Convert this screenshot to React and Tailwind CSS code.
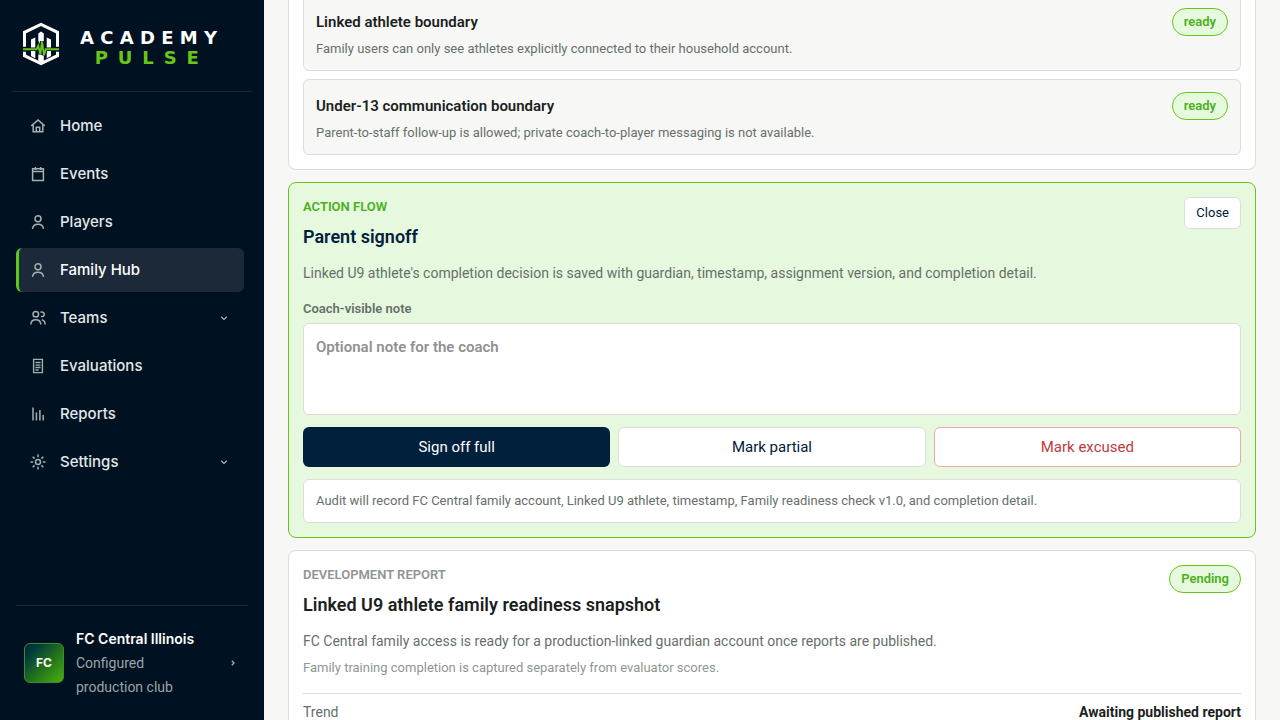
import React from "react";

const iconProps = {
  viewBox: "0 0 16 16",
  fill: "none",
  stroke: "currentColor",
  strokeWidth: 1.5,
  className: "size-4 shrink-0 text-[#a3b0b0]",
  "aria-hidden": true,
};

function HomeIcon() {
  return (
    <svg {...iconProps}>
      <path d="M1.3 7.9 8 2l6.700 5.900M3.200 6.600v7.100h9.600V6.600M6.300 13.500V9.300h3.400v4.200" />
    </svg>
  );
}

function CalendarIcon() {
  return (
    <svg {...iconProps}>
      <path d="M2.600 2.800h10.800v11.700H2.600zM2.600 5.600h10.800M5.400 1v3M10.600 1v3" />
    </svg>
  );
}

function PersonIcon() {
  return (
    <svg {...iconProps}>
      <circle cx="8" cy="4.700" r="3" />
      <path d="M2.500 14.800c.3-2.900 2.700-4.600 5.500-4.600s5.200 1.700 5.500 4.600" />
    </svg>
  );
}

function PeopleIcon() {
  return (
    <svg {...iconProps}>
      <circle cx="5.800" cy="4.200" r="2.800" />
      <path d="M.8 14.500c.2-2.900 2.200-4.700 5-4.700s4.800 1.800 5 4.700M10.500 2.300c2-.9 3.800.2 3.800 2s-1.700 2.700-3.300 2.100M11.800 9.800c2 .5 3.200 2.200 3.400 4.700" />
    </svg>
  );
}

function DocumentIcon() {
  return (
    <svg {...iconProps}>
      <path d="M3.600 1.400h8.800v13.200H3.600zM5.500 4.500h5M5.500 7.100h5M5.500 9.500h5M5.500 12h3" strokeWidth="1.400" />
    </svg>
  );
}

function ChartIcon() {
  return (
    <svg {...iconProps}>
      <path d="M3 1.500v13M6.400 6.500v8M9.900 4v10.500M13.200 9v5.500" />
    </svg>
  );
}

function GearIcon() {
  return (
    <svg {...iconProps}>
      <circle cx="8" cy="8" r="2.500" />
      <path d="M8 .5v2.700M8 12.800v2.700M.5 8h2.700M12.800 8h2.700M2.700 2.700l1.900 1.900M11.400 11.400l1.900 1.900M13.300 2.700l-1.900 1.900M2.700 13.300l1.900-1.900" />
    </svg>
  );
}

function Chevron({ right }) {
  return (
    <svg
      viewBox="0 0 8 8"
      fill="none"
      stroke="currentColor"
      strokeWidth="1.300"
      className="size-2 shrink-0 text-[#a3b0b0]"
      aria-hidden="true"
    >
      <path d={right ? "M2.800 1.800 5 4 2.800 6.200" : "M1.200 2.700 4 5.400l2.800-2.700"} />
    </svg>
  );
}

function LogoMark() {
  return (
    <svg viewBox="0 0 38 44" className="h-11 w-[38px] shrink-0" fill="none" aria-hidden="true">
      <path d="M2.500 24.800V10.300L19 2.400l16.500 7.900v14.500" stroke="#fff" strokeWidth="3" />
      <path d="M2.500 29.800v3.900L19 41.600l16.500-7.900v-3.900" stroke="#fff" strokeWidth="3" />
      <path
        d="M9 17.500l4.300-2v20.800L9 34zM16.300 11.500L19 9.600l2.800 1.900v28L19 41l-2.700-1.500zM24.700 15.500l4.300 2V34l-4.300 2.300z"
        fill="#fff"
      />
      <path d="M1 27.300h13.500l1.800-3.500 2 8.500 1.700-13 2 14 1.800-6h13.200" stroke="#001122" strokeWidth="3.600" />
      <path d="M1 27.300h13.500l1.800-3.500 2 8.500 1.700-13 2 14 1.800-6h13.200" stroke="#66c61c" strokeWidth="1.900" />
    </svg>
  );
}

const navItems = [
  { label: "Home", Icon: HomeIcon },
  { label: "Events", Icon: CalendarIcon },
  { label: "Players", Icon: PersonIcon },
  { label: "Family Hub", Icon: PersonIcon, active: true },
  { label: "Teams", Icon: PeopleIcon, expandable: true },
  { label: "Evaluations", Icon: DocumentIcon },
  { label: "Reports", Icon: ChartIcon },
  { label: "Settings", Icon: GearIcon, expandable: true },
];

function Sidebar() {
  return (
    <aside className="flex w-[264px] shrink-0 flex-col bg-[#001122]">
      <div className="mx-3 flex h-[92px] items-center gap-5 border-b border-[#1b2836] pb-1 pl-[10px]">
        <LogoMark />
        <div className="flex flex-col items-center pt-2 font-['DejaVu_Sans'] text-lg leading-5 font-bold">
          <span className="tracking-[0.35em] text-white">ACADEMY</span>
          <span className="tracking-[0.55em] text-[#66c61c]">PULSE</span>
        </div>
      </div>
      <nav className="flex flex-col gap-1 pt-3 pr-5 pl-4">
        {navItems.map(({ label, Icon, active, expandable }) => (
          <a
            key={label}
            href="#"
            aria-current={active ? "page" : undefined}
            className={
              "flex h-11 items-center gap-[14px] rounded-md border-l-3 pr-4 pl-[11px] font-['Inter',sans-serif] text-[15px] font-medium " +
              (active ? "border-[#5cc81e] bg-[#1c2938] text-white" : "border-transparent text-[#e1e8e8]")
            }
          >
            <Icon />
            <span className="flex-1">{label}</span>
            {expandable && <Chevron />}
          </a>
        ))}
      </nav>
      <div className="mx-4 mt-auto border-t border-[#1b2836] px-2 py-[21px]">
        <button type="button" className="flex w-full items-center gap-3 pr-[3px] text-left">
          <span className="flex size-10 shrink-0 items-center justify-center rounded-md border border-[#3f8a3a] bg-linear-135 from-[#00203c] via-[#1f6a1c] to-[#46b400] font-['Inter',sans-serif] text-xs font-bold text-white">
            FC
          </span>
          <span className="flex-1 text-sm leading-6">
            <span className="block font-['Inter',sans-serif] font-semibold whitespace-nowrap text-white">FC Central Illinois</span>
            <span className="block w-28 text-[#99a5a8]">Configured production club</span>
          </span>
          <Chevron right />
        </button>
      </div>
    </aside>
  );
}

function Pill({ children }) {
  return (
    <span className="flex h-7 shrink-0 items-center rounded-full border border-[#66c61c] bg-[#e6f8de] px-[11px] text-[13px] font-semibold text-[#4bb01a]">
      {children}
    </span>
  );
}

function Boundary({ title, text, className }) {
  return (
    <div className={"border border-[#dcdedc] bg-[#f7f8f6] px-3 pb-3 " + className}>
      <div className="flex h-7 items-center justify-between">
        <h3 className="text-[15px] font-semibold text-[#1b1f1d]">{title}</h3>
        <Pill>ready</Pill>
      </div>
      <p className="mt-1 text-[13px] leading-[18px] text-[#66706a]">{text}</p>
    </div>
  );
}

export default function App() {
  return (
    <div className="flex h-screen overflow-hidden bg-[#f7f8f6] font-['Roboto',sans-serif]">
      <Sidebar />
      <main className="flex min-w-0 flex-1 flex-col gap-3 overflow-y-auto px-6 [scrollbar-width:none]">
        <section className="flex shrink-0 flex-col gap-2 rounded-b-lg border border-t-0 border-[#dcdedc] bg-white px-[14px] pb-[14px]">
          <Boundary
            title="Linked athlete boundary"
            text="Family users can only see athletes explicitly connected to their household account."
            className="rounded-b-md border-t-0 pt-2"
          />
          <Boundary
            title="Under-13 communication boundary"
            text="Parent-to-staff follow-up is allowed; private coach-to-player messaging is not available."
            className="rounded-md pt-3"
          />
        </section>

        <section className="shrink-0 rounded-lg border border-[#66c61c] bg-[#e6f8de] p-[14px]">
          <div className="flex items-start justify-between">
            <div>
              <p className="text-[13px] leading-5 font-semibold text-[#4bb01a]">ACTION FLOW</p>
              <h2 className="mt-1.5 text-lg leading-7 font-semibold text-[#00203c]">Parent signoff</h2>
            </div>
            <button
              type="button"
              className="h-8 rounded-md border border-[#dcdedc] bg-white px-[11px] text-[13px] text-[#00203c]"
            >
              Close
            </button>
          </div>
          <p className="mt-3 text-sm leading-5 text-[#66706a]">
            Linked U9 athlete's completion decision is saved with guardian, timestamp, assignment version, and completion detail.
          </p>
          <label htmlFor="note" className="mt-4 block text-[13px] leading-5 font-semibold text-[#66706a]">
            Coach-visible note
          </label>
          <textarea
            id="note"
            placeholder="Optional note for the coach"
            className="mt-1 block h-[92px] w-full resize-none rounded-md border border-[#dcdedc] bg-white px-3 py-3 text-[15px] leading-[22px] font-semibold text-[#1b1f1d] placeholder:text-[#8f9290]"
          />
          <div className="mt-3 grid grid-cols-3 gap-2 text-[15px]">
            <button type="button" className="h-10 rounded-md bg-[#00203c] text-white">Sign off full</button>
            <button type="button" className="h-10 rounded-md border border-[#dcdedc] bg-white text-[#00203c]">Mark partial</button>
            <button type="button" className="h-10 rounded-md border border-[#eda9a6] bg-white text-[#bd3b3b]">Mark excused</button>
          </div>
          <p className="mt-3 rounded-md border border-[#dcdedc] bg-white px-3 py-[11px] text-[13px] leading-5 text-[#66706a]">
            Audit will record FC Central family account, Linked U9 athlete, timestamp, Family readiness check v1.0, and completion detail.
          </p>
        </section>

        <section className="shrink-0 rounded-lg border border-[#dcdedc] bg-white p-[14px]">
          <div className="flex items-start justify-between">
            <div>
              <p className="text-[13px] leading-5 font-semibold text-[#8f9692]">DEVELOPMENT REPORT</p>
              <h2 className="mt-1.5 text-lg leading-7 font-semibold text-[#1b1f1d]">Linked U9 athlete family readiness snapshot</h2>
            </div>
            <Pill>Pending</Pill>
          </div>
          <p className="mt-3 text-sm leading-5 text-[#66706a]">
            FC Central family access is ready for a production-linked guardian account once reports are published.
          </p>
          <p className="mt-2 text-[13px] leading-[18px] text-[#8f9692]">
            Family training completion is captured separately from evaluator scores.
          </p>
          <div className="mt-4 flex justify-between border-t border-[#dcdedc] pt-2 text-sm leading-5">
            <span className="text-[#66706a]">Trend</span>
            <strong className="font-bold text-[#1b1f1d]">Awaiting published report</strong>
          </div>
        </section>
      </main>
    </div>
  );
}
